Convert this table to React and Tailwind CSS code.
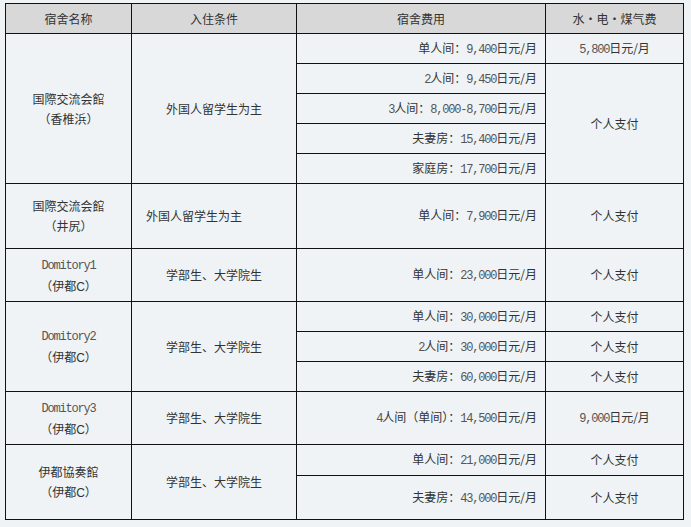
import React from "react";

const cjk = { fontFamily: '"Noto Sans CJK SC", "Noto Sans", sans-serif' };

function N({ children }) {
  return (
    <span
      className="text-[12px] tracking-[-1.2px] text-[#555]"
      style={{ fontFamily: '"Liberation Mono", monospace' }}
    >
      {children}
    </span>
  );
}

function C() {
  return <span style={{ fontFamily: '"Liberation Sans", sans-serif' }}>C</span>;
}

const td = "border border-[#111] p-0 align-middle";
const fee = td + " text-right pr-[8px]";
const util = td + " text-center";
const name = td + " text-center leading-[20px]";
const cond = td + " text-center";

function Fee({ label, num }) {
  return (
    <td className={fee}>
      {label}
      <N>{num}</N>日元/月
    </td>
  );
}

export default function App() {
  return (
    <div className="min-h-screen bg-[#eff3f6] pt-[3px] pl-[5px]" style={cjk}>
      <table className="border-collapse text-[12px] text-[#333] w-[678px] table-fixed">
        <colgroup>
          <col className="w-[126px]" />
          <col className="w-[165px]" />
          <col className="w-[249px]" />
          <col className="w-[138px]" />
        </colgroup>
        <thead>
          <tr className="h-[30px] bg-[#d8d8d8]">
            <th className={td + " font-normal text-center"}>宿舍名称</th>
            <th className={td + " font-normal text-center"}>入住条件</th>
            <th className={td + " font-normal text-center"}>宿舍费用</th>
            <th className={td + " font-normal text-center"}>水・电・煤气费</th>
          </tr>
        </thead>
        <tbody>
          <tr className="h-[30px]">
            <td rowSpan={5} className={name}>
              国際交流会館
              <br />（香椎浜）
            </td>
            <td rowSpan={5} className={cond}>外国人留学生为主</td>
            <Fee label="单人间：" num="9,400" />
            <td className={util}>
              <N>5,800</N>日元/月
            </td>
          </tr>
          <tr className="h-[30px]">
            <td className={fee}>
              <N>2</N>人间：<N>9,450</N>日元/月
            </td>
            <td rowSpan={4} className={util}>个人支付</td>
          </tr>
          <tr className="h-[30px]">
            <td className={fee}>
              <N>3</N>人间：<N>8,000-8,700</N>日元/月
            </td>
          </tr>
          <tr className="h-[30px]">
            <Fee label="夫妻房：" num="15,400" />
          </tr>
          <tr className="h-[30px]">
            <Fee label="家庭房：" num="17,700" />
          </tr>
          <tr className="h-[65px]">
            <td className={name}>
              国際交流会館
              <br />（井尻）
            </td>
            <td className={td + " text-left pl-[14px]"}>外国人留学生为主</td>
            <Fee label="单人间：" num="7,900" />
            <td className={util}>个人支付</td>
          </tr>
          <tr className="h-[53px]">
            <td className={name}>
              <N>Domitory1</N>
              <br />（伊都<C />）
            </td>
            <td className={cond}>学部生、大学院生</td>
            <Fee label="单人间：" num="23,000" />
            <td className={util}>个人支付</td>
          </tr>
          <tr className="h-[30px]">
            <td rowSpan={3} className={name}>
              <N>Domitory2</N>
              <br />（伊都<C />）
            </td>
            <td rowSpan={3} className={cond}>学部生、大学院生</td>
            <Fee label="单人间：" num="30,000" />
            <td className={util}>个人支付</td>
          </tr>
          <tr className="h-[30px]">
            <td className={fee}>
              <N>2</N>人间：<N>30,000</N>日元/月
            </td>
            <td className={util}>个人支付</td>
          </tr>
          <tr className="h-[30px]">
            <Fee label="夫妻房：" num="60,000" />
            <td className={util}>个人支付</td>
          </tr>
          <tr className="h-[53px]">
            <td className={name}>
              <N>Domitory3</N>
              <br />（伊都<C />）
            </td>
            <td className={cond}>学部生、大学院生</td>
            <td className={fee}>
              <N>4</N>人间（单间）：<N>14,500</N>日元/月
            </td>
            <td className={util}>
              <N>9,000</N>日元/月
            </td>
          </tr>
          <tr className="h-[31px]">
            <td rowSpan={2} className={name}>
              伊都協奏館
              <br />（伊都<C />）
            </td>
            <td rowSpan={2} className={cond}>学部生、大学院生</td>
            <Fee label="单人间：" num="21,000" />
            <td className={util}>个人支付</td>
          </tr>
          <tr className="h-[44px]">
            <Fee label="夫妻房：" num="43,000" />
            <td className={util}>个人支付</td>
          </tr>
        </tbody>
      </table>
    </div>
  );
}
